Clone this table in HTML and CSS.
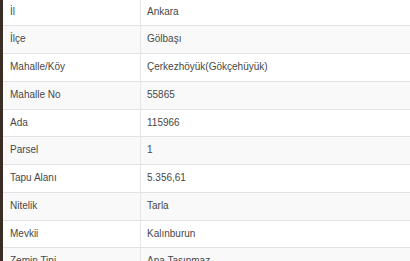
FILE: index.html
```html
<!DOCTYPE html>
<html lang="tr">
<head>
<meta charset="utf-8">
<link rel="stylesheet" href="styles.css">
</head>
<body>
<div class="page">
  <div class="edge"></div>
  <table class="info">
    <tbody>
      <tr><td class="k">İl</td><td class="v">Ankara</td></tr>
      <tr><td class="k">İlçe</td><td class="v">Gölbaşı</td></tr>
      <tr><td class="k">Mahalle/Köy</td><td class="v">Çerkezhöyük(Gökçehüyük)</td></tr>
      <tr><td class="k">Mahalle No</td><td class="v">55865</td></tr>
      <tr><td class="k">Ada</td><td class="v">115966</td></tr>
      <tr><td class="k">Parsel</td><td class="v">1</td></tr>
      <tr><td class="k">Tapu Alanı</td><td class="v">5.356,61</td></tr>
      <tr><td class="k">Nitelik</td><td class="v">Tarla</td></tr>
      <tr><td class="k">Mevkii</td><td class="v">Kalınburun</td></tr>
      <tr><td class="k">Zemin Tipi</td><td class="v">Ana Taşınmaz</td></tr>
    </tbody>
  </table>
</div>
</body>
</html>
```
FILE: styles.css
```css
html, body {
  margin: 0;
  padding: 0;
  background: #fff;
  overflow: hidden;
}
.page {
  display: flex;
  align-items: stretch;
  width: 410px;
  height: 261px;
  overflow: hidden;
}
.edge {
  width: 3px;
  flex: none;
  background: #3a2d26;
}
.info {
  flex: 1;
  border-collapse: collapse;
  margin-top: -2.5px;
  align-self: flex-start;
  font-family: "Liberation Sans", Arial, sans-serif;
  font-size: 10px;
  color: #484848;
}
.info td {
  border-top: 1px solid #e2e2e2;
  height: 26.75px;
  padding: 0;
  line-height: 26.75px;
  white-space: nowrap;
}
.info tr:nth-child(even) td {
  background: #f9f9f9;
}
.info td.k {
  width: 130px;
  padding-left: 7px;
}
.info td.v {
  border-left: 1px solid #e6e6e6;
  padding-left: 6px;
}
```
